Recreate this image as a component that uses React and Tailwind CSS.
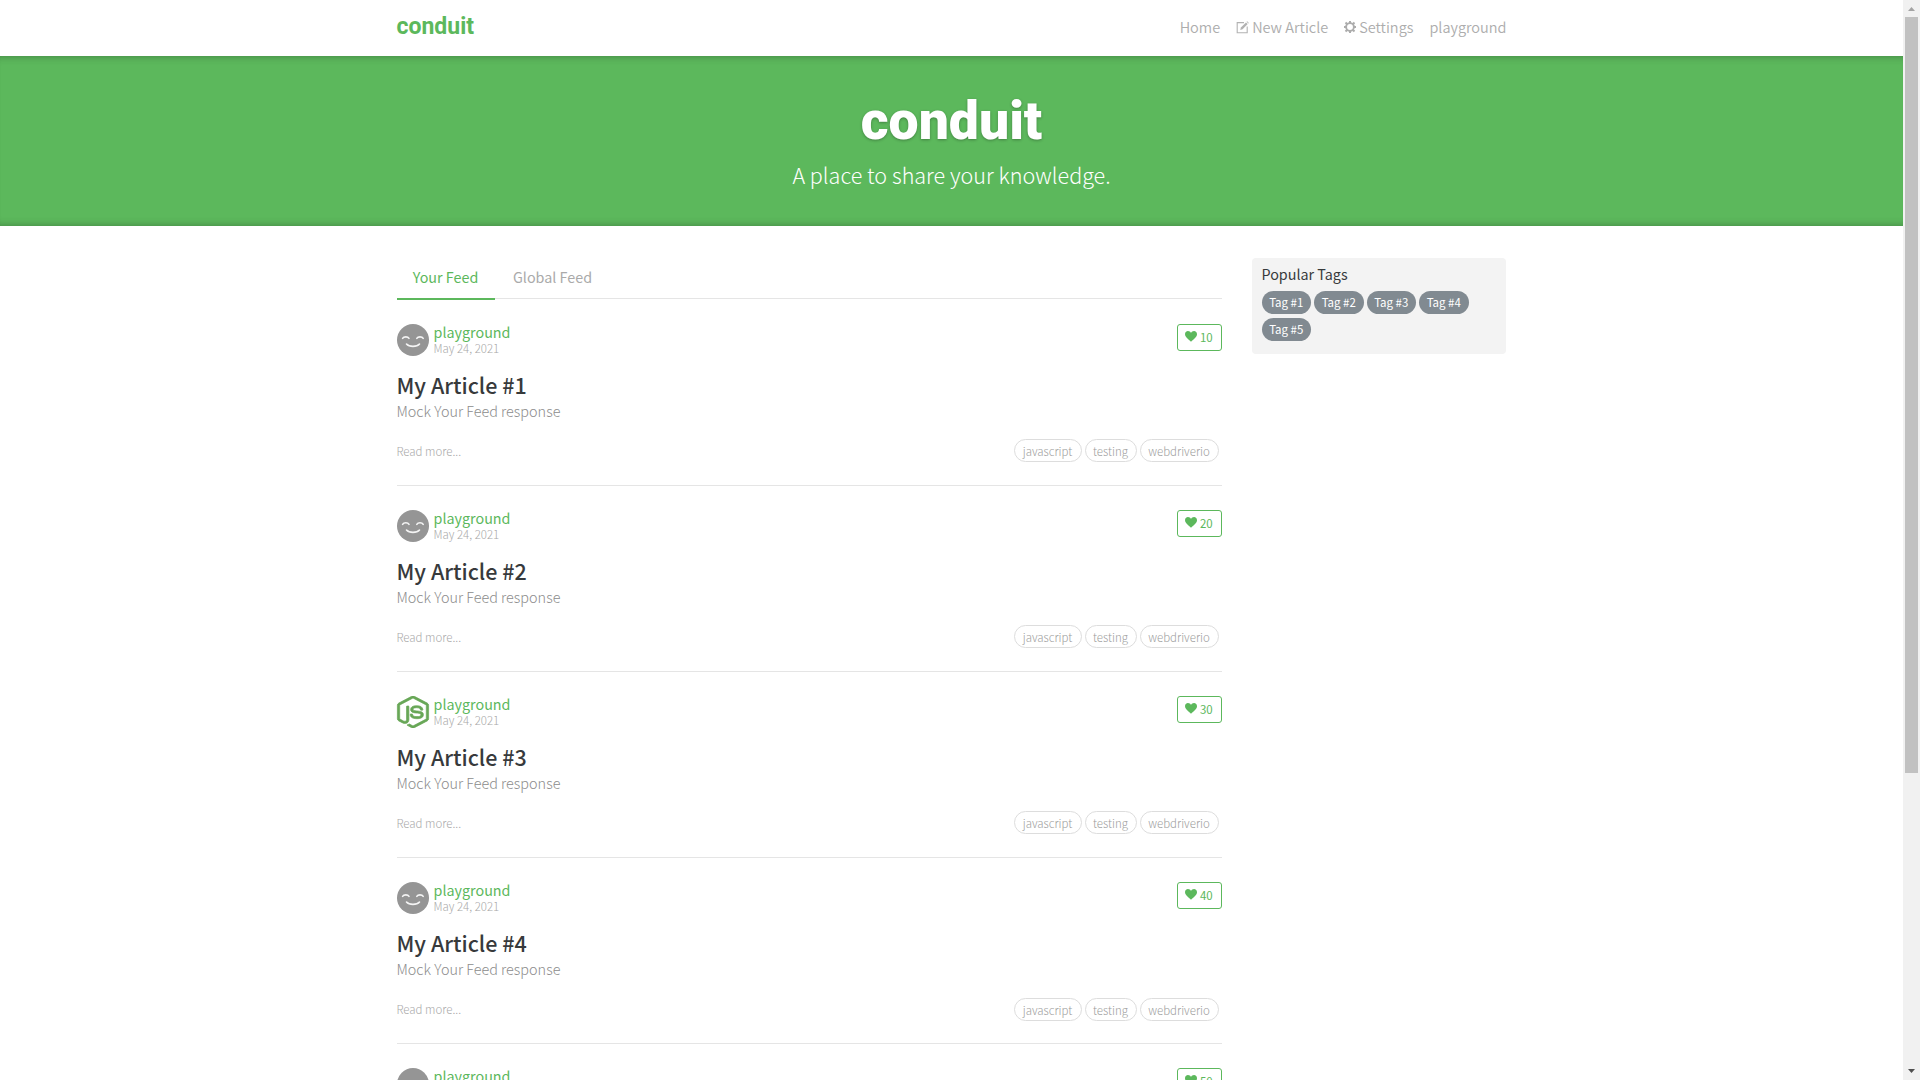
import { SiNodedotjs } from 'react-icons/si';

const articles = [
  { n: 1, likes: 10 },
  { n: 2, likes: 20 },
  { n: 3, likes: 30, node: true },
  { n: 4, likes: 40 },
  { n: 5, likes: 50 },
];

function Compose() {
  return (
    <svg className="h-[13px] w-[13px]" viewBox="0 0 13 13" fill="none">
      <path d="M8 1.6H1.2v10.2h10V5.6" stroke="#b2b2b2" strokeWidth="1.1" />
      <path d="M4.2 8.9l.7-2.4L10 1.4l1.7 1.7-5.1 5.1z" fill="#b2b2b2" />
      <path d="M10.6.8l.6-.6 1.7 1.7-.6.6z" fill="#b2b2b2" />
    </svg>
  );
}

function Gear() {
  return (
    <svg className="h-[12px] w-[12px]" viewBox="0 0 12 12" fill="none" stroke="#acacac">
      <circle cx="6" cy="6" r="3.9" strokeWidth="1.9" />
      <g strokeWidth="2">
        <path d="M6 0v2M6 10v2M0 6h2M10 6h2M1.5 1.5l1.5 1.5M9 9l1.500 1.500M1.500 10.500l1.500-1.500M9 3l1.500-1.500" />
      </g>
    </svg>
  );
}

function Heart() {
  return (
    <svg className="mt-[6px] h-[11px] w-[12px]" viewBox="0 0 12 11" fill="#5cb85c">
      <path d="M6 10.8C4.9 9.6 2.700 8 1.300 6.300.4 5.200 0 4.300 0 3.200 0 1.400 1.300.1 3 .1c1.300 0 2.400.7 3 1.800C6.600.8 7.700.1 9 .1c1.700 0 3 1.300 3 3.100 0 1.100-.4 2-1.300 3.100C9.300 8 7.100 9.600 6 10.800z" />
    </svg>
  );
}

function Smiley() {
  return (
    <svg className="h-8 w-8" viewBox="0 0 32 32" fill="none">
      <circle cx="16" cy="16" r="16" fill="#959595" />
      <g stroke="#f4f4f4" strokeWidth="1.6" strokeLinecap="round">
        <path d="M5.600 14.400c1.200-2.100 5.200-2.100 6.400 0" />
        <path d="M19.800 14.400c1.200-2.100 5.200-2.100 6.400 0" />
        <path d="M9.500 20c2.800 3.200 10.200 3.200 13 0" />
      </g>
    </svg>
  );
}

function Article({ n, likes, node }) {
  return (
    <article className="flex h-[186.1px] flex-col border-b border-[#e5e5e5] pt-6">
      <div className="flex h-8 shrink-0 items-start">
        {node ? (
          <SiNodedotjs className="h-8 w-8 scale-x-110 stroke-[#68a757] stroke-[0.5px] text-[#68a757]" />
        ) : (
          <Smiley />
        )}
        <div className="ml-[5px] flex-1">
          <div className="h-[15px] text-[14.33px] leading-[15px] text-[#5cb85c]">playground</div>
          <div className="h-[18px] text-[11.47px] font-light leading-[18px] text-[#a8a8a8]">May 24, 2021</div>
        </div>
        <div className="flex h-[27px] w-[45px] justify-center gap-[2.5px] rounded-[3px] border border-[#5cb85c] text-[11.47px] leading-[25px] text-[#5cb85c]">
          <Heart />
          <span>{likes}</span>
        </div>
      </div>
      <h1 className="mt-4 h-[26px] shrink-0 text-[21.5px] font-medium leading-[26px] text-[#373a3c]">My Article #{n}</h1>
      <p className="mt-[3.4px] h-5 shrink-0 text-[14.4px] font-light leading-[20px] text-[#8c8c8c]">Mock Your Feed response</p>
      <div className="mt-[18.1px] flex h-[22.5px] shrink-0 items-start justify-between pr-[3px] text-[11.47px] font-light text-[#9c9c9c]">
        <span className="pt-[0.3px] leading-[22px] text-[#a8a8a8]">Read more...</span>
        <div className="flex gap-[3px]">
          <span className="h-[23px] w-[68px] rounded-full border border-[#ddd] text-center leading-[22px]">javascript</span>
          <span className="h-[23px] w-[52px] rounded-full border border-[#ddd] text-center leading-[22px]">testing</span>
          <span className="h-[23px] w-[79px] rounded-full border border-[#ddd] text-center leading-[22px]">webdriverio</span>
        </div>
      </div>
    </article>
  );
}

export default function App() {
  return (
    <div className="flex h-[1080px] w-[1920px] overflow-hidden bg-white font-['Noto_Sans_CJK_SC','Noto_Sans',sans-serif] text-[14.33px]">
      <div className="h-full w-[1903px] overflow-hidden">
        <nav className="mx-auto flex h-[56px] w-[1110px] items-start justify-between">
          <a className="pt-[13px] font-['Roboto',sans-serif] text-[23px] font-bold leading-[28px] text-[#5cb85c]">conduit</a>
          <div className="flex items-start gap-[16px] pt-[17px] text-[14.5px] font-[350] leading-[20px] text-[#adadad]">
            <a>Home</a>
            <a className="flex items-center gap-[3px]"><Compose />New Article</a>
            <a className="flex items-center gap-[3px]"><Gear />Settings</a>
            <a>playground</a>
          </div>
        </nav>
        <header className="h-[169.5px] bg-[#5cb85c] pt-[33px] text-center text-white shadow-[inset_0_8px_8px_-8px_rgba(0,0,0,0.3),inset_0_-8px_8px_-8px_rgba(0,0,0,0.3)]">
          <h1 className="h-[64px] font-['Roboto',sans-serif] text-[53.5px] font-black leading-[64px] [text-shadow:0_1px_3px_rgba(0,0,0,0.3)]">conduit</h1>
          <p className="mt-[7px] h-[30px] text-[21.55px] font-light leading-[30px]">A place to share your knowledge.</p>
        </header>
        <div className="mx-auto flex w-[1110px] items-start gap-[30px] pt-[32px]">
          <main className="w-[825px]">
            <div className="mb-[0.5px] flex h-[41.8px] items-start border-b border-[#e5e5e5] leading-[37px]">
              <a className="h-[42px] w-[98px] shrink-0 border-b-2 border-[#5cb85c] text-center text-[#5cb85c]">Your Feed</a>
              <a className="w-[116px] text-center text-[#aaa]">Global Feed</a>
            </div>
            {articles.map((a) => <Article key={a.n} {...a} />)}
          </main>
          <aside className="h-[96.5px] w-[254.500px] rounded bg-[#f3f3f3] px-[10px] pt-[5px]">
            <p className="h-[23px] leading-[22px] text-[#373a3c]">Popular Tags</p>
            <div className="mt-[5px] flex flex-wrap gap-x-[3px] gap-y-[4px] text-[11.47px] leading-[22px] text-white">
              {[1, 2, 3, 4, 5].map((t) => (
                <span key={t} className="h-[23px] w-[49.500px] rounded-full bg-[#818a91] text-center">Tag #{t}</span>
              ))}
            </div>
          </aside>
        </div>
      </div>
      <div className="flex h-full w-[17px] flex-col items-center justify-between bg-[#f1f1f1]">
        <svg className="h-[17px] w-[17px] shrink-0" viewBox="0 0 17 17"><path d="M5 11h7L8.500 7z" fill="#a3a3a3" /></svg>
        <div className="h-[756px] w-[13px] shrink-0 bg-[#c1c1c1]" />
        <div className="flex-1" />
        <svg className="h-[17px] w-[17px] shrink-0" viewBox="0 0 17 17"><path d="M5 6h7l-3.500 4z" fill="#505050" /></svg>
      </div>
    </div>
  );
}
